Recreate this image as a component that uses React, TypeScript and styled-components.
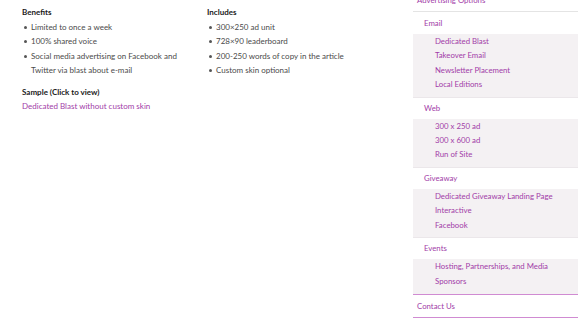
import * as React from 'react';
import styled, { createGlobalStyle } from 'styled-components';

const GlobalStyle = createGlobalStyle`
    html, body {
        margin: 0;
        padding: 0;
        background: #ffffff;
    }
    body {
        font-family: Lato, 'Liberation Sans', sans-serif;
        font-size: 8px;
        overflow: hidden;
    }
`;

const Page = styled.div`
    display: flex;
    width: 580px;
    height: 319px;
    overflow: hidden;
`;

const Main = styled.div`
    width: 391px;
    padding: 5px 0 0 22px;
    display: grid;
    grid-template-columns: 185px 1fr;
    align-content: start;
`;

const Column = styled.div`
    display: flex;
    flex-direction: column;
    padding-right: 20px;
`;

const Heading = styled.div<{ spaced?: boolean }>`
    font-weight: 700;
    color: #1a1a1a;
    line-height: 14.5px;
    margin-top: ${(props) => (props.spaced ? '7px' : '0')};
`;

const List = styled.ul`
    list-style: none;
    margin: 0;
    padding: 0;
`;

const Item = styled.li`
    position: relative;
    padding-left: 9px;
    line-height: 14.5px;
    color: #4a4a4a;

    &::before {
        content: '';
        position: absolute;
        left: 2px;
        top: 6px;
        width: 3px;
        height: 3px;
        border-radius: 50%;
        background: #555;
    }
`;

const TextLink = styled.a`
    color: #a23ca8;
    text-decoration: none;
    line-height: 14.5px;
`;

const Sidebar = styled.nav`
    width: 165px;
    margin-top: -11px;
    display: flex;
    flex-direction: column;
    font-size: 7.8px;
`;

const TitleRow = styled.div`
    height: 22px;
    line-height: 22px;
    padding-left: 4px;
    color: #a23ca8;
    border-bottom: 1px solid #e4e4e4;
`;

const SectionHeader = styled.div<{ first?: boolean }>`
    height: 21px;
    line-height: 21px;
    padding-left: 11px;
    color: #a23ca8;
    border-top: 1px solid ${(props) => (props.first ? 'transparent' : '#ebe7ea')};
`;

const SubList = styled.div`
    background: #f4f1f3;
    padding-bottom: 5.5px;
    display: flex;
    flex-direction: column;
`;

const SubItem = styled.a`
    line-height: 14.3px;
    padding-left: 22px;
    color: #a23ca8;
    text-decoration: none;
`;

const ContactRow = styled.a`
    height: 22px;
    line-height: 22px;
    padding-left: 4px;
    color: #a23ca8;
    text-decoration: none;
    border-top: 1px solid #d08bd2;
    border-bottom: 1px solid #d08bd2;
`;

const sections: { title: string; items: string[] }[] = [
    { title: 'Email', items: ['Dedicated Blast', 'Takeover Email', 'Newsletter Placement', 'Local Editions'] },
    { title: 'Web', items: ['300 x 250 ad', '300 x 600 ad', 'Run of Site'] },
    { title: 'Giveaway', items: ['Dedicated Giveaway Landing Page', 'Interactive', 'Facebook'] },
    { title: 'Events', items: ['Hosting, Partnerships, and Media', 'Sponsors'] },
];

const benefits = [
    'Limited to once a week',
    '100% shared voice',
    'Social media advertising on Facebook and Twitter via blast about e-mail',
];

const includes = ['300×250 ad unit', '728×90 leaderboard', '200-250 words of copy in the article', 'Custom skin optional'];

const App: React.FC = () => (
    <>
        <GlobalStyle />
        <Page>
            <Main>
                <Column>
                    <Heading>Benefits</Heading>
                    <List>
                        {benefits.map((b) => (
                            <Item key={b}>{b}</Item>
                        ))}
                    </List>
                    <Heading spaced>Sample (Click to view)</Heading>
                    <TextLink href="#">Dedicated Blast without custom skin</TextLink>
                </Column>
                <Column>
                    <Heading>Includes</Heading>
                    <List>
                        {includes.map((i) => (
                            <Item key={i}>{i}</Item>
                        ))}
                    </List>
                </Column>
            </Main>
            <Sidebar>
                <TitleRow>Advertising Options</TitleRow>
                {sections.map((s, idx) => (
                    <React.Fragment key={s.title}>
                        <SectionHeader first={idx === 0}>{s.title}</SectionHeader>
                        <SubList>
                            {s.items.map((item) => (
                                <SubItem key={item} href="#">
                                    {item}
                                </SubItem>
                            ))}
                        </SubList>
                    </React.Fragment>
                ))}
                <ContactRow href="#">Contact Us</ContactRow>
            </Sidebar>
        </Page>
    </>
);

export default App;
